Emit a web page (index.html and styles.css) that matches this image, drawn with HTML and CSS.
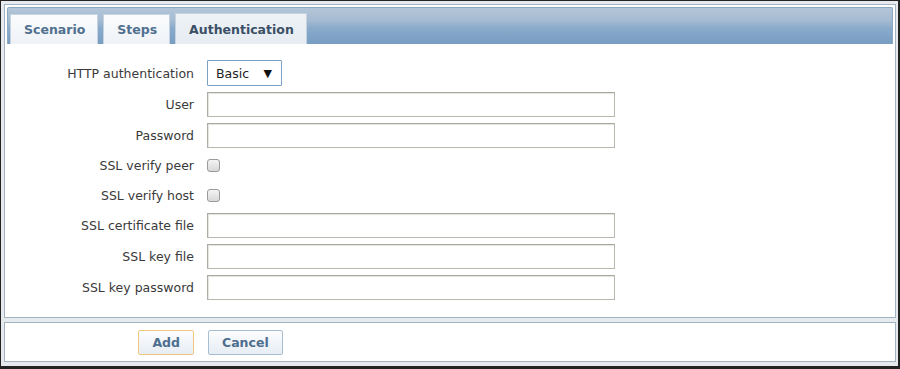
FILE: index.html
```html
<!DOCTYPE html>
<html lang="en">
<head>
  <meta charset="UTF-8">
  <title>Web scenario - Authentication</title>
  <link rel="stylesheet" href="styles.css">
</head>
<body>
  <div class="frame">
    <!-- Tabbed form panel -->
    <div class="panel">
      <div class="tab-bar">
        <a class="tab" href="#">Scenario</a>
        <a class="tab" href="#">Steps</a>
        <a class="tab active" href="#">Authentication</a>
      </div>

      <form class="form-grid">
        <label>HTTP authentication</label>
        <div>
          <div class="select">
            <span>Basic</span>
            <span class="arrow">&#9660;</span>
          </div>
        </div>

        <label>User</label>
        <div><input type="text" class="text-input"></div>

        <label>Password</label>
        <div><input type="text" class="text-input"></div>

        <label>SSL verify peer</label>
        <div class="row-check"><span class="checkbox"></span></div>

        <label>SSL verify host</label>
        <div class="row-check"><span class="checkbox"></span></div>

        <label>SSL certificate file</label>
        <div><input type="text" class="text-input"></div>

        <label>SSL key file</label>
        <div><input type="text" class="text-input"></div>

        <label>SSL key password</label>
        <div><input type="text" class="text-input"></div>
      </form>
    </div>

    <!-- Buttons -->
    <div class="footer">
      <div class="footer-left"><button class="btn btn-focus">Add</button></div>
      <div><button class="btn">Cancel</button></div>
    </div>
  </div>
</body>
</html>
```

FILE: styles.css
```css
/* General styles */
html, body {
  margin: 0;
  padding: 0;
}

body {
  width: 900px;
  height: 369px;
  font-family: "DejaVu Sans", Verdana, sans-serif;
  font-size: 12.5px;
  color: #3a3a3a;
  overflow: hidden;
}

.frame {
  box-sizing: border-box;
  width: 900px;
  height: 369px;
  border-style: solid;
  border-color: #232323;
  border-width: 1px 2px 3px 1px;
  background: #e6eaee;
  padding: 3px 2px 0 3px;
  display: flex;
  flex-direction: column;
  gap: 4px;
}

/* Main panel */
.panel {
  height: 314px;
  box-sizing: border-box;
  border: 1px solid #a3b3c3;
  background: #fff;
  display: flex;
  flex-direction: column;
}

.tab-bar {
  margin: 2px 2px 0 2px;
  height: 37px;
  box-sizing: border-box;
  border: 1px solid #8ea7c0;
  border-bottom: none;
  border-radius: 2px 2px 0 0;
  background: linear-gradient(#b3c6d9, #a5bbd1 35%, #8aabcb 55%, #779dc2);
  display: flex;
  align-items: flex-end;
  gap: 5px;
  padding-left: 2px;
}

.tab {
  height: 30px;
  box-sizing: border-box;
  padding: 0 12px 0 13px;
  display: flex;
  align-items: center;
  font-weight: bold;
  color: #50708f;
  text-decoration: none;
  background: linear-gradient(#fbfcfd, #eef2f6);
  border: 1px solid #c6d3e0;
  border-bottom: none;
}

.tab.active {
  height: 31px;
  color: #3a4f66;
  background: linear-gradient(#eef2f6, #e6ecf2);
}

/* Form rows */
.form-grid {
  display: grid;
  grid-template-columns: 189px 1fr;
  grid-template-rows: 26px 25px 25px 23px 24px 25px 25px 25px;
  column-gap: 13px;
  row-gap: 6px;
  padding-top: 16px;
  margin: 0;
}

.form-grid label {
  display: flex;
  align-items: center;
  justify-content: flex-end;
}

.row-check {
  display: flex;
  align-items: center;
}

.text-input {
  box-sizing: border-box;
  width: 408px;
  height: 25px;
  margin: 0;
  border: 1px solid #b9b8ae;
  border-top-color: #a9a89e;
  border-left-color: #aeada3;
  box-shadow: inset 1px 1px 1px #e4e3dc;
  background: #fff;
}

.select {
  box-sizing: border-box;
  width: 75px;
  height: 26px;
  border: 1px solid #7c9fc6;
  border-radius: 1px;
  display: flex;
  align-items: center;
  justify-content: space-between;
  padding: 0 9px 0 8px;
  color: #222;
  background: #fff;
}

.arrow {
  font-size: 11px;
  color: #111;
}

.checkbox {
  display: inline-block;
  width: 13px;
  height: 13px;
  box-sizing: border-box;
  border: 1px solid #9a9a9a;
  border-radius: 3px;
  background: linear-gradient(#f4f4f4, #d8d8d8);
}

/* Footer buttons */
.footer {
  height: 40px;
  box-sizing: border-box;
  border: 1px solid #a3b3c3;
  background: #fff;
  display: grid;
  grid-template-columns: 189px 1fr;
  column-gap: 14px;
  align-items: center;
}

.footer-left {
  display: flex;
  justify-content: flex-end;
}

.btn {
  height: 25px;
  box-sizing: border-box;
  padding: 0 13px;
  font-family: "DejaVu Sans", Verdana, sans-serif;
  font-size: 12.5px;
  font-weight: bold;
  color: #4e6e8e;
  background: linear-gradient(#fcfdfe, #e6edf4);
  border: 1px solid #a9bdd1;
  border-radius: 2px;
}

.btn-focus {
  border-color: #f1c77f;
}
```
